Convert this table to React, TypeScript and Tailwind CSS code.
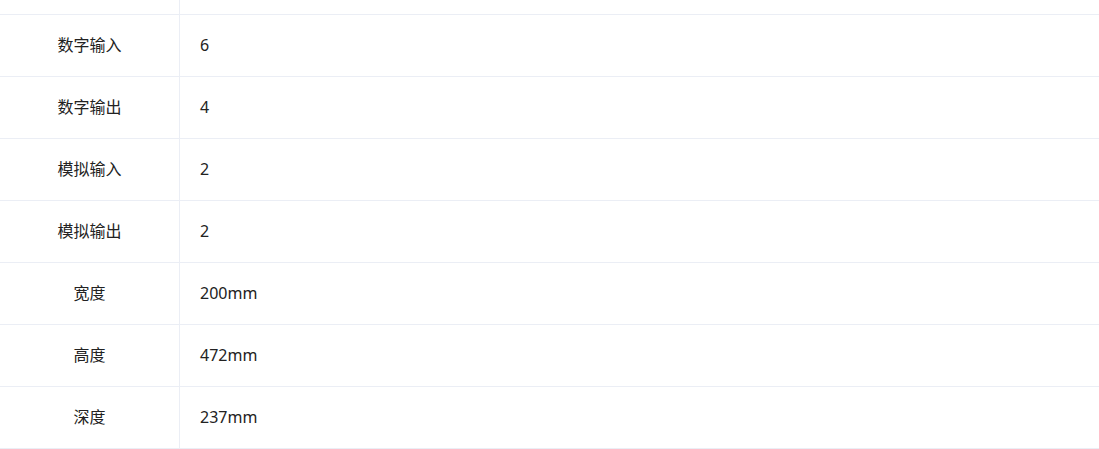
import React from "react";

const rows: [string, string][] = [
  ["数字输入", "6"],
  ["数字输出", "4"],
  ["模拟输入", "2"],
  ["模拟输出", "2"],
  ["宽度", "200mm"],
  ["高度", "472mm"],
  ["深度", "237mm"],
];

export default function App() {
  return (
    <div
      className="w-[1099px] h-[449px] bg-white overflow-hidden text-[16px] text-[#222]"
      style={{ fontFamily: '"Noto Sans", "Noto Sans CJK SC", sans-serif' }}
    >
      <div className="flex h-[15px] border-b border-[#ebeef5]">
        <div className="w-[180px] shrink-0 border-r border-[#ebeef5]" />
        <div className="flex-1" />
      </div>
      {rows.map(([k, v]) => (
        <div key={k} className="flex h-[62px] border-b border-[#ebeef5]">
          <div className="w-[180px] shrink-0 border-r border-[#ebeef5] flex items-center justify-center pb-[2px]">
            {k}
          </div>
          <div className="flex-1 flex items-center pl-[20px] pb-[2px]">{v}</div>
        </div>
      ))}
    </div>
  );
}
